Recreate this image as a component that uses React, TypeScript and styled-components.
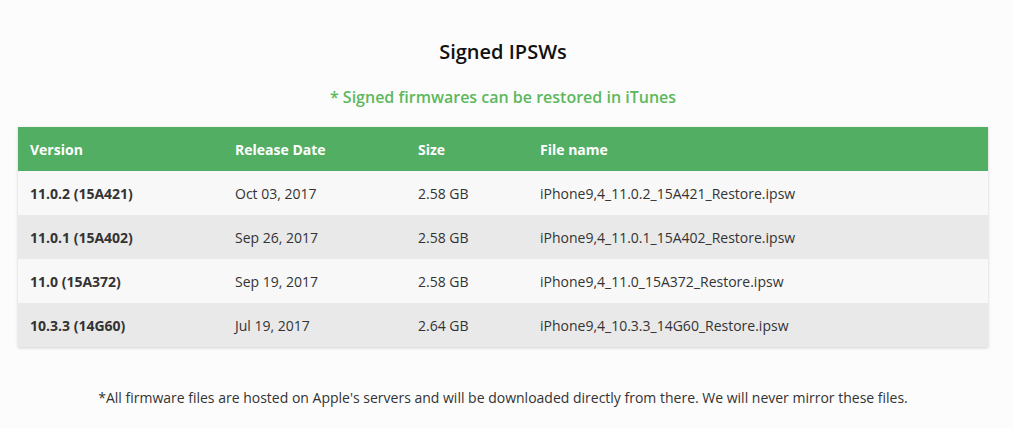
import styled, { createGlobalStyle } from "styled-components";

const GlobalStyle = createGlobalStyle`
  body {
    margin: 0;
    background: #fcfcfc;
    font-family: "Open Sans", "Liberation Sans", sans-serif;
    color: #333;
  }
`;

const Page = styled.div`
  width: 1014px;
  padding: 0 26px 0 18px;
  box-sizing: border-box;
  display: flex;
  flex-direction: column;
  align-items: center;
`;

const Title = styled.h2`
  margin: 38px 0 0;
  font-size: 20px;
  line-height: 28px;
  font-weight: 600;
  color: #111;
`;

const Notice = styled.p`
  margin: 20px 0 0;
  font-size: 16px;
  line-height: 22px;
  font-weight: 600;
  color: #5cb85c;
`;

const Table = styled.table`
  width: 970px;
  margin-top: 19px;
  table-layout: fixed;
  border-collapse: collapse;
  box-shadow: 0 1px 3px rgba(0, 0, 0, 0.18);
  font-size: 14px;
`;

const HeadCell = styled.th<{ $w?: number }>`
  box-sizing: border-box;
  width: ${({ $w }) => ($w ? `${$w}px` : "auto")};
  height: 44px;
  padding: 0 12px;
  background: #52ae63;
  color: #fff;
  font-weight: 700;
  text-align: left;
`;

const Row = styled.tr`
  background: #f8f8f8;
  &:nth-child(even) {
    background: #e9e9e9;
  }
`;

const Cell = styled.td<{ $bold?: boolean }>`
  height: 44px;
  padding: 0 12px;
  font-weight: ${({ $bold }) => ($bold ? 700 : 400)};
  color: #333;
`;

const Footer = styled.p`
  margin: 41px 0 0;
  font-size: 14px;
  line-height: 20px;
  color: #333;
`;

const firmwares = [
  ["11.0.2 (15A421)", "Oct 03, 2017", "2.58 GB", "iPhone9,4_11.0.2_15A421_Restore.ipsw"],
  ["11.0.1 (15A402)", "Sep 26, 2017", "2.58 GB", "iPhone9,4_11.0.1_15A402_Restore.ipsw"],
  ["11.0 (15A372)", "Sep 19, 2017", "2.58 GB", "iPhone9,4_11.0_15A372_Restore.ipsw"],
  ["10.3.3 (14G60)", "Jul 19, 2017", "2.64 GB", "iPhone9,4_10.3.3_14G60_Restore.ipsw"],
];

export default function App() {
  return (
    <>
      <GlobalStyle />
      <Page>
        <Title>Signed IPSWs</Title>
        <Notice>* Signed firmwares can be restored in iTunes</Notice>
        <Table>
          <thead>
            <tr>
              <HeadCell $w={205}>Version</HeadCell>
              <HeadCell $w={183}>Release Date</HeadCell>
              <HeadCell $w={122}>Size</HeadCell>
              <HeadCell>File name</HeadCell>
            </tr>
          </thead>
          <tbody>
            {firmwares.map((f) => (
              <Row key={f[3]}>
                <Cell $bold>{f[0]}</Cell>
                <Cell>{f[1]}</Cell>
                <Cell>{f[2]}</Cell>
                <Cell>{f[3]}</Cell>
              </Row>
            ))}
          </tbody>
        </Table>
        <Footer>
          *All firmware files are hosted on Apple's servers and will be downloaded directly from there. We will never mirror these files.
        </Footer>
      </Page>
    </>
  );
}
